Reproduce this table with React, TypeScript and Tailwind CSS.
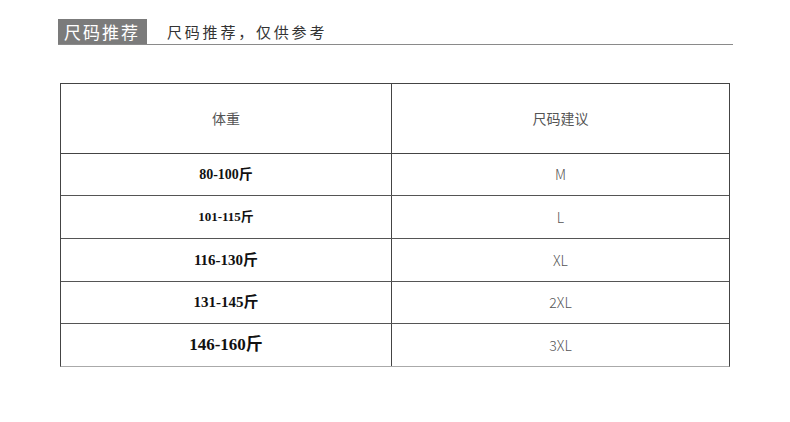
const rows = [
  { weight: "80-100斤", size: "M", cls: "text-[14px]", h: "h-[42px]" },
  { weight: "101-115斤", size: "L", cls: "text-[13px]", h: "h-[43px]" },
  { weight: "116-130斤", size: "XL", cls: "text-[15px]", h: "h-[43px]" },
  { weight: "131-145斤", size: "2XL", cls: "text-[15px]", h: "h-[42px]" },
  { weight: "146-160斤", size: "3XL", cls: "text-[17px]", h: "h-[42px]" },
];

const sans = "font-['Noto_Sans_CJK_SC',sans-serif]";
const serif = "font-['Liberation_Serif','Noto_Sans_CJK_SC',serif]";

const App = () => (
  <div className="w-[790px] h-[422px] bg-white pt-[19px]">
    <div className="ml-[58px] w-[675px] flex items-end border-b border-[#8a8a8a]">
      <div
        className={`${sans} bg-[#7b7b7b] text-white text-[17px] leading-[25px] h-[25px] pl-[6px] pr-[7px] tracking-[2px]`}
      >
        尺码推荐
      </div>
      <div
        className={`${sans} ml-[20px] text-[#333] text-[15px] leading-[25px] tracking-[2.8px]`}
      >
        尺码推荐，仅供参考
      </div>
    </div>

    <div className="ml-[60px] mt-[38px] w-[670px] border-l border-r border-t border-[#444] border-b-[#aaa] border-b">
      <div className="grid grid-cols-[331px_1fr] h-[70px] border-b border-[#444]">
        <div className={`${sans} flex items-center justify-center border-r border-[#444] text-[14px] text-[#555]`}>
          体重
        </div>
        <div className={`${sans} flex items-center justify-center text-[14px] text-[#555]`}>
          尺码建议
        </div>
      </div>
      {rows.map((r, i) => (
        <div
          key={r.size}
          className={`grid grid-cols-[331px_1fr] ${r.h} ${
            i < rows.length - 1 ? "border-b border-[#555]" : ""
          }`}
        >
          <div
            className={`${serif} ${r.cls} font-bold text-[#111] flex items-center justify-center border-r border-[#444]`}
          >
            {r.weight}
          </div>
          <div className={`${sans} flex items-center justify-center text-[14px] text-[#555] font-light`}>
            {r.size}
          </div>
        </div>
      ))}
    </div>
  </div>
);

export default App;
